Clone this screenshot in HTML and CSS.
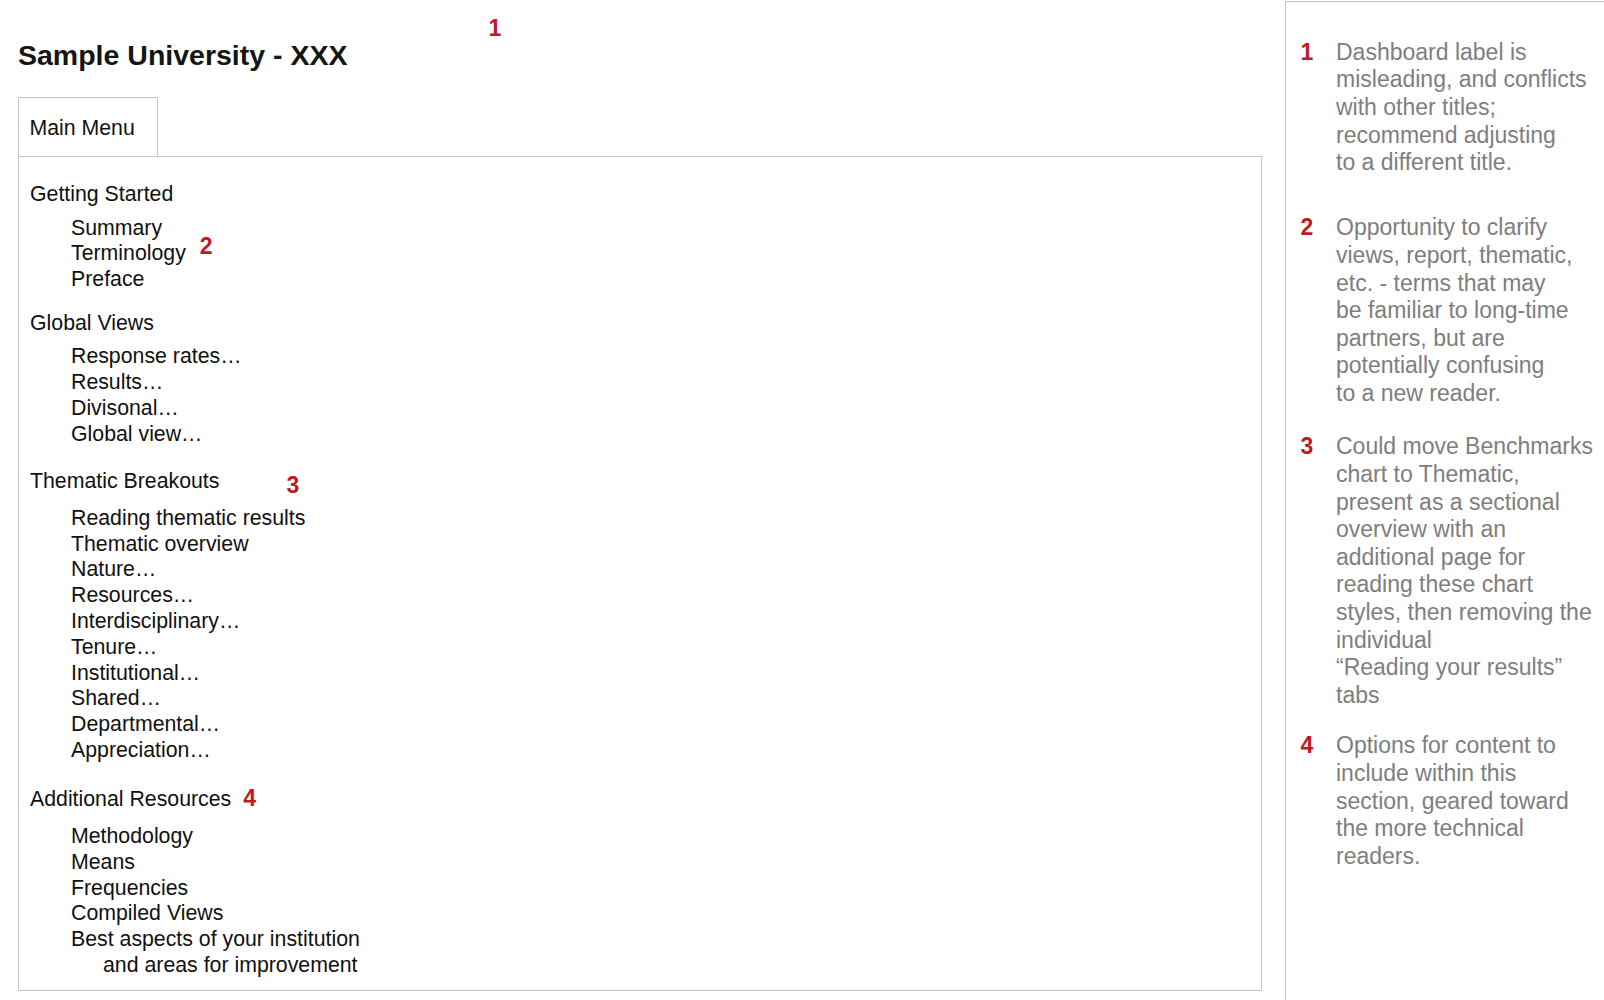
FILE: index.html
```html
<!DOCTYPE html>
<html lang="en">
<head>
<meta charset="utf-8">
<title>Sample University - XXX</title>
<link rel="stylesheet" href="styles.css">
</head>
<body>
<div class="page">
  <main class="main">
    <header class="page-head">
      <h1 class="page-title">Sample University - XXX</h1>
      <span class="marker marker--title">1</span>
    </header>
    <div class="tab">Main Menu</div>
    <section class="panel">
      <div class="group group--1">
        <h2 class="group-title">Getting Started</h2>
        <ul class="items">
          <li>Summary</li>
          <li>Terminology<span class="marker marker--two">2</span></li>
          <li>Preface</li>
        </ul>
      </div>
      <div class="group group--2">
        <h2 class="group-title">Global Views</h2>
        <ul class="items">
          <li>Response rates…</li>
          <li>Results…</li>
          <li>Divisonal…</li>
          <li>Global view…</li>
        </ul>
      </div>
      <div class="group group--3">
        <h2 class="group-title">Thematic Breakouts<span class="marker marker--three">3</span></h2>
        <ul class="items">
          <li>Reading thematic results</li>
          <li>Thematic overview</li>
          <li>Nature…</li>
          <li>Resources…</li>
          <li>Interdisciplinary…</li>
          <li>Tenure…</li>
          <li>Institutional…</li>
          <li>Shared…</li>
          <li>Departmental…</li>
          <li>Appreciation…</li>
        </ul>
      </div>
      <div class="group group--4">
        <h2 class="group-title">Additional Resources<span class="marker marker--four">4</span></h2>
        <ul class="items">
          <li>Methodology</li>
          <li>Means</li>
          <li>Frequencies</li>
          <li>Compiled Views</li>
          <li>Best aspects of your institution<br><span class="cont">and areas for improvement</span></li>
        </ul>
      </div>
    </section>
  </main>
  <aside class="notes">
    <div class="note note--1">
      <span class="note-num">1</span>
      <p class="note-text">Dashboard label is<br>misleading, and conflicts<br>with other titles;<br>recommend adjusting<br>to a different title.</p>
    </div>
    <div class="note note--2">
      <span class="note-num">2</span>
      <p class="note-text">Opportunity to clarify<br>views, report, thematic,<br>etc. - terms that may<br>be familiar to long-time<br>partners, but are<br>potentially confusing<br>to a new reader.</p>
    </div>
    <div class="note note--3">
      <span class="note-num">3</span>
      <p class="note-text">Could move Benchmarks<br>chart to Thematic,<br>present as a sectional<br>overview with an<br>additional page for<br>reading these chart<br>styles, then removing the<br>individual<br>“Reading your results”<br>tabs</p>
    </div>
    <div class="note note--4">
      <span class="note-num">4</span>
      <p class="note-text">Options for content to<br>include within this<br>section, geared toward<br>the more technical<br>readers.</p>
    </div>
  </aside>
</div>
</body>
</html>
```

FILE: styles.css
```css
* {
  box-sizing: border-box;
}

html, body {
  margin: 0;
  padding: 0;
  background: #ffffff;
}

body {
  font-family: "Liberation Sans", Arial, Helvetica, sans-serif;
  color: #111111;
}

.page {
  display: flex;
  min-height: 100vh;
}

.main {
  flex: 0 0 1262px;
  padding-left: 18px;
}

.page-head {
  position: relative;
  padding-top: 38px;
}

.page-title {
  margin: 0;
  font-size: 28.5px;
  line-height: 34px;
  font-weight: bold;
  color: #151515;
}

.marker {
  font-size: 23px;
  font-weight: bold;
  color: #bf1a1f;
  line-height: 0;
}

.marker--title {
  position: absolute;
  left: 470.6px;
  top: 17px;
  line-height: 22px;
}

.marker--two {
  margin-left: 14px;
  vertical-align: 6.7px;
}

.marker--three {
  margin-left: 67px;
  vertical-align: -5px;
}

.marker--four {
  margin-left: 12px;
}

.tab {
  margin-top: 25px;
  width: 140px;
  border: 1px solid #c4c4c4;
  border-bottom: none;
  padding: 16.6px 10.4px 15.4px;
  font-size: 21.3px;
  line-height: 26px;
}

.panel {
  width: 1244px;
  border: 1px solid #c4c4c4;
  padding: 24.8px 11px 11px;
  font-size: 21.3px;
  line-height: 25.8px;
}

.group-title {
  margin: 0 0 8px;
  font-size: 21.3px;
  line-height: 25.8px;
  font-weight: normal;
}

.group--2 {
  margin-top: 18px;
}

.group--2 .group-title {
  margin-bottom: 7.5px;
}

.group--3 {
  margin-top: 22px;
}

.group--3 .group-title {
  margin-bottom: 10.5px;
}

.group--4 {
  margin-top: 23px;
}

.group--4 .group-title {
  margin-bottom: 11.5px;
}

.items {
  list-style: none;
  margin: 0;
  padding: 0 0 0 41px;
}

.items li {
  white-space: nowrap;
}

.cont {
  display: inline-block;
  padding-left: 32px;
}

.notes {
  flex: 1 1 auto;
  margin-top: 1px;
  margin-left: 23px;
  border-top: 1px solid #c4c4c4;
  border-left: 1px solid #c4c4c4;
  padding: 36.9px 0 0 14.5px;
}

.note {
  display: grid;
  grid-template-columns: 35.5px 1fr;
  align-items: baseline;
}

.note--1 {
  margin-bottom: 37.6px;
}

.note--2 {
  margin-bottom: 25.8px;
}

.note--3 {
  margin-bottom: 23px;
}

.note-num {
  font-size: 23px;
  font-weight: bold;
  color: #bf1a1f;
  line-height: 27.6px;
}

.note-text {
  margin: 0;
  font-size: 23px;
  line-height: 27.6px;
  color: #7e7e7e;
  white-space: nowrap;
}
```
